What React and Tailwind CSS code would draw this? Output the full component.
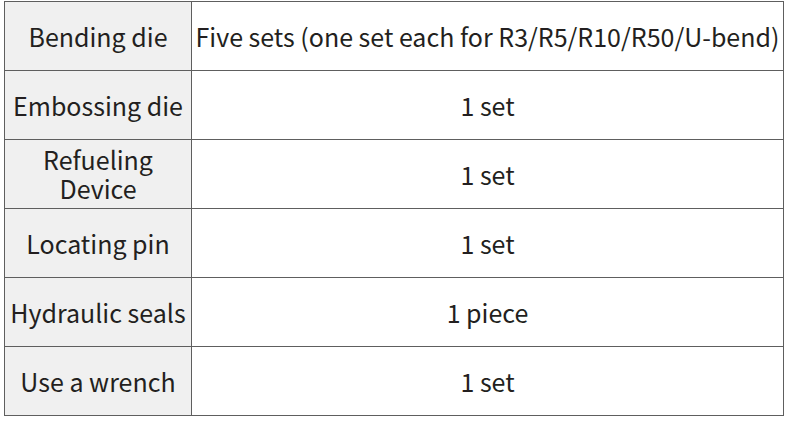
import React from 'react';

const rows = [
    { name: ['Bending die'], value: 'Five sets (one set each for R3/R5/R10/R50/U-bend)' },
    { name: ['Embossing die'], value: '1 set' },
    { name: ['Refueling', 'Device'], value: '1 set' },
    { name: ['Locating pin'], value: '1 set' },
    { name: ['Hydraulic seals'], value: '1 piece' },
    { name: ['Use a wrench'], value: '1 set' },
];

export default function App() {
    return (
        <div className="w-[790px] h-[447px] bg-white pt-px pl-[4px]" style={{ fontFamily: '"Noto Sans CJK SC", "Noto Sans", sans-serif' }}>
            <table className="border-collapse table-fixed w-[780px] text-[25px] leading-[29px] text-[#231f20]">
                <colgroup>
                    <col className="w-[187px]" />
                    <col />
                </colgroup>
                <tbody>
                    {rows.map((row, i) => (
                        <tr key={i} className="h-[69px]">
                            <td className="border border-[#5e5e5e] bg-[#f0f0f0] text-center align-middle p-0">
                                {row.name.map((line, j) => (
                                    <div key={j}>{line}</div>
                                ))}
                            </td>
                            <td className="border border-[#5e5e5e] bg-white text-center align-middle p-0 whitespace-nowrap">
                                {row.value}
                            </td>
                        </tr>
                    ))}
                </tbody>
            </table>
        </div>
    );
}
